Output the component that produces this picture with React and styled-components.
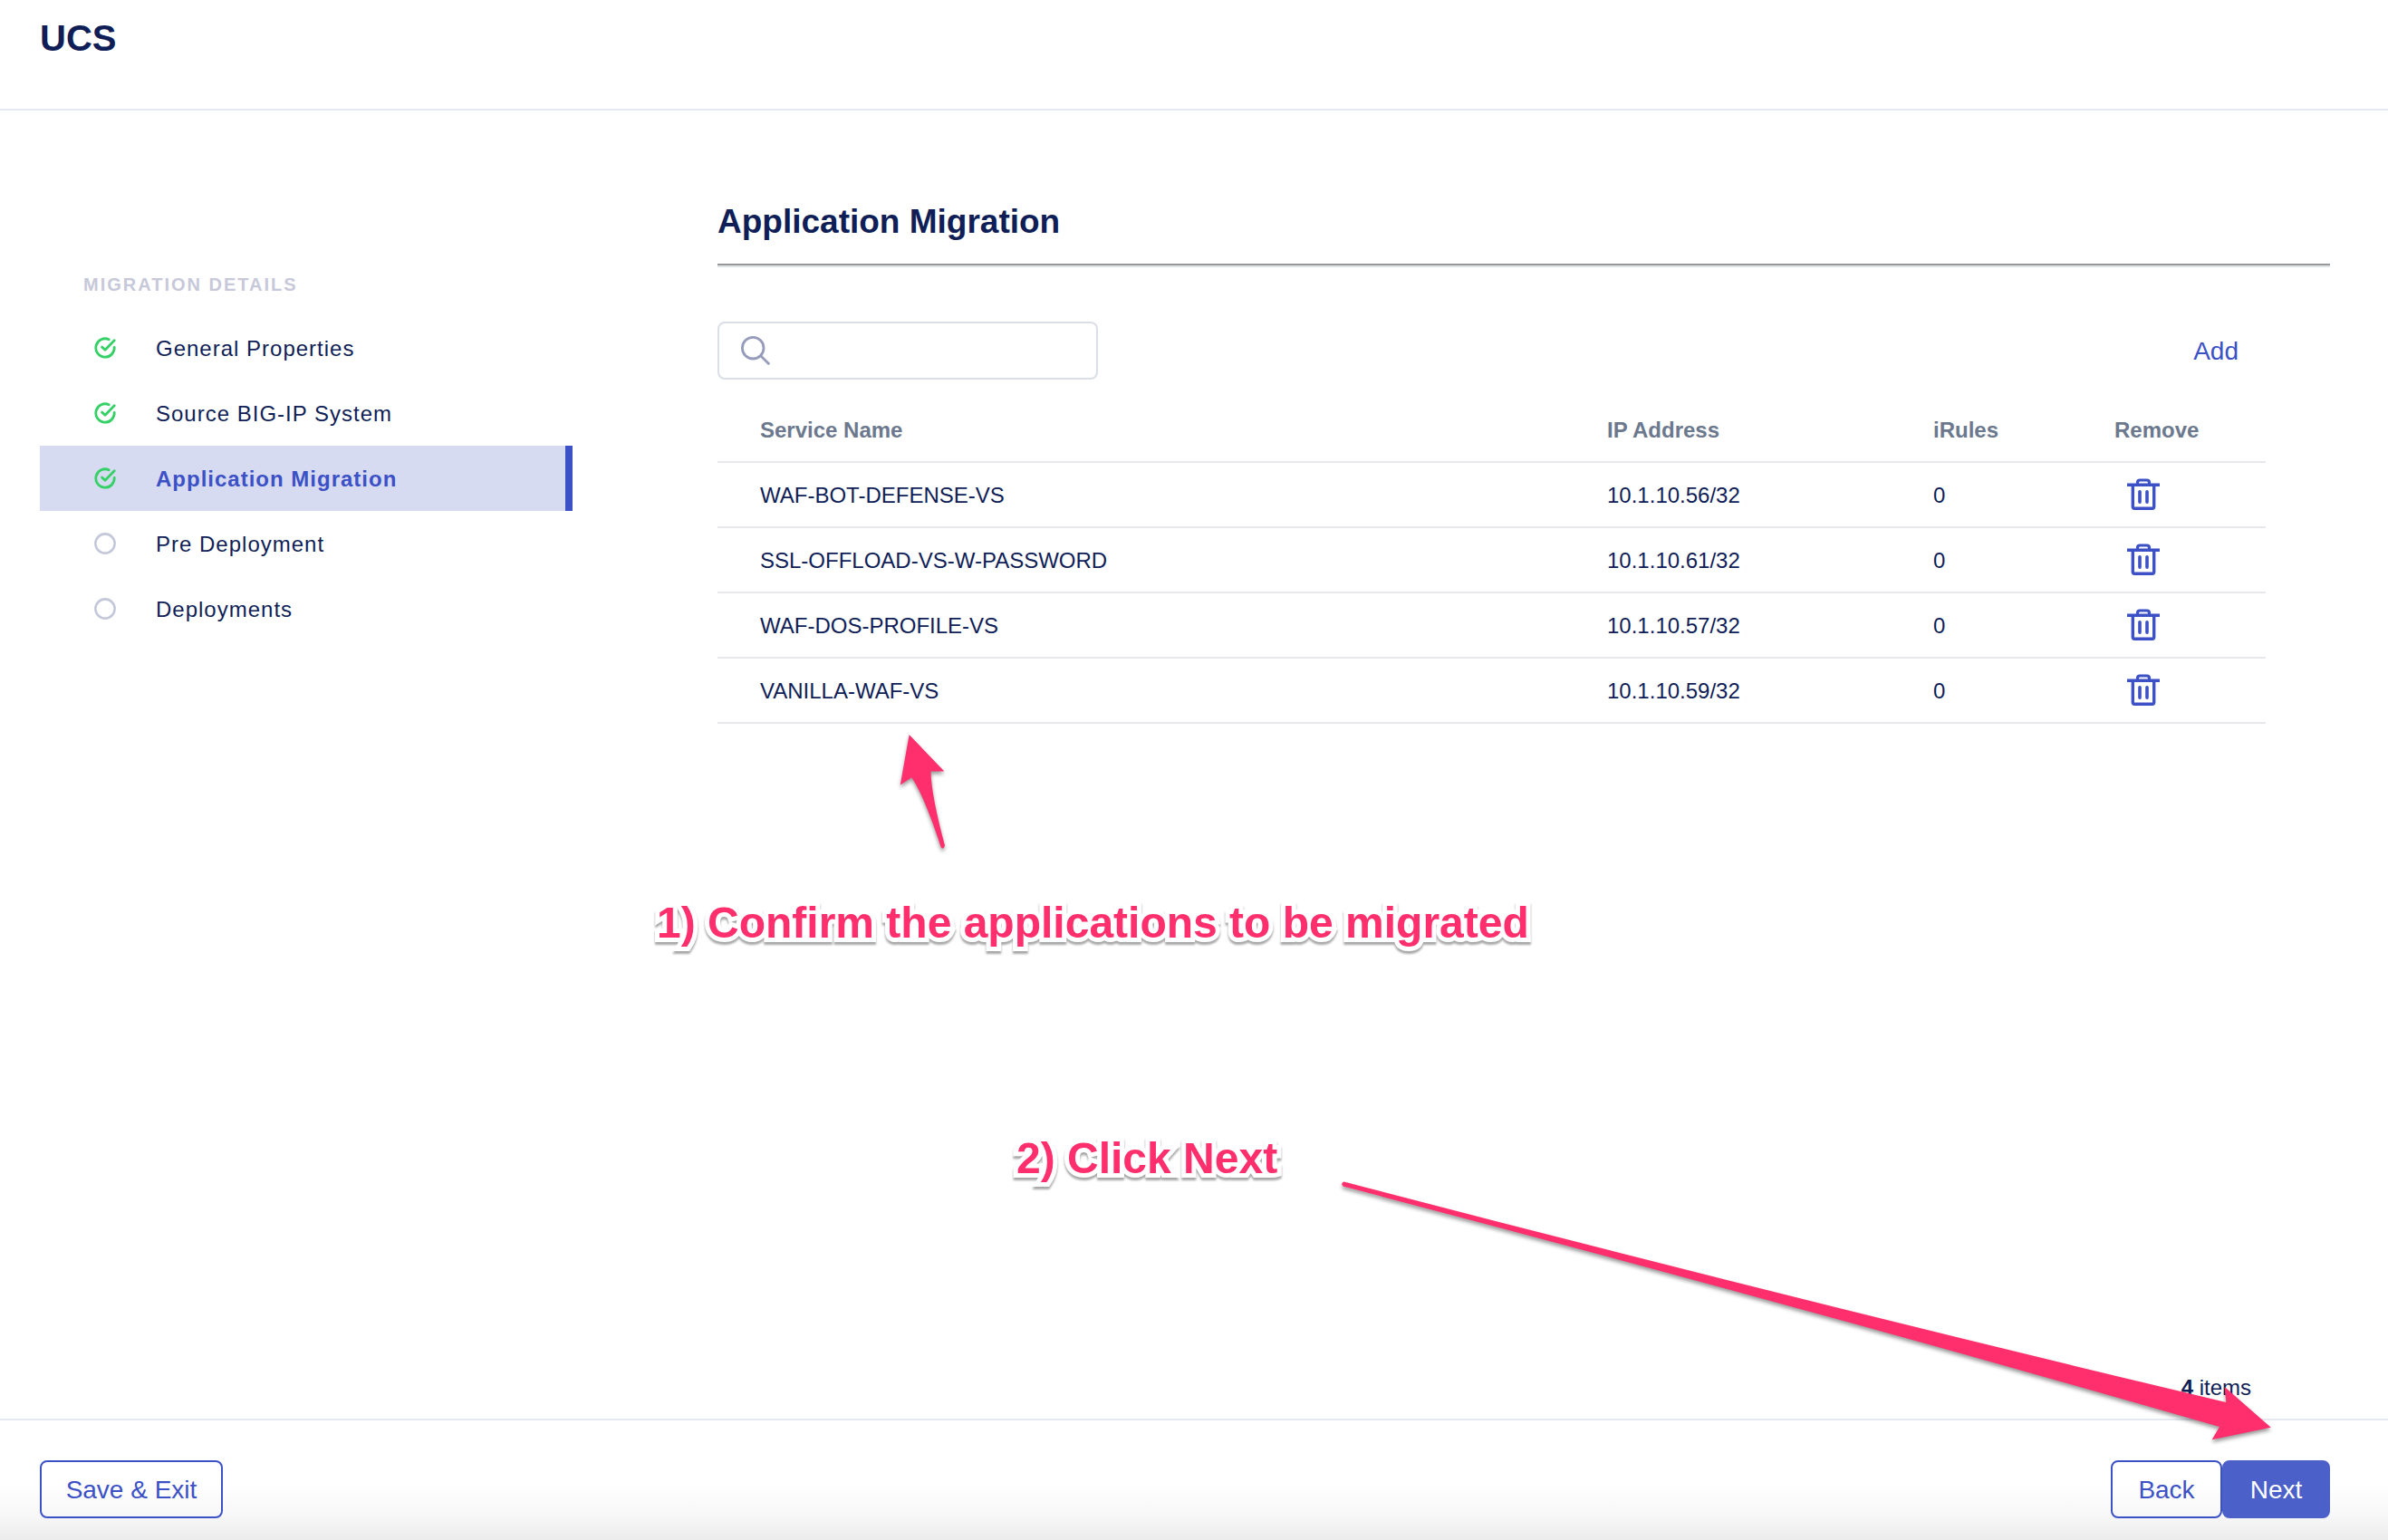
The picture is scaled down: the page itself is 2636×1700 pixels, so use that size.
import React, { useState } from "react";
import styled, { createGlobalStyle, css } from "styled-components";

const c = {
  navy: "#0f1e57",
  blue: "#3b51c5",
  blueFill: "#4c60c9",
  selected: "#d7dbf1",
  muted: "#c7c8d9",
  heading: "#6b788e",
  line: "#e6e8f2",
  rowLine: "#e8e9ef",
  green: "#35d167",
  pink: "#ff2e6c",
};

const GlobalStyle = createGlobalStyle`
  *, *::before, *::after { box-sizing: border-box; }
  body {
    margin: 0;
    background: #fff;
    color: ${c.navy};
    font: 24px/32px "Liberation Sans", Arial, Helvetica, sans-serif;
  }
  button, input { font: inherit; color: inherit; }
`;

const Page = styled.div`
  position: relative;
  display: flex;
  flex-direction: column;
  min-height: 100vh;
  overflow: hidden;
`;

const Header = styled.header`
  height: 122px;
  padding: 18px 44px;
  border-bottom: 2px solid ${c.line};
`;

const PageTitle = styled.h1`
  margin: 0;
  font-size: 40px;
  line-height: 48px;
`;

const Body = styled.div`
  flex: 1;
  display: flex;
  gap: 160px;
  padding: 0 64px 0 44px;
`;

const Sidebar = styled.nav`
  flex: 0 0 588px;
  padding-top: 180px;
`;

const SidebarLabel = styled.h2`
  margin: 0 0 22px;
  padding-left: 48px;
  color: ${c.muted};
  font-size: 20px;
  line-height: 24px;
  letter-spacing: 2px;
`;

const StepList = styled.ol`
  margin: 0;
  padding: 0;
  list-style: none;
`;

const StepLink = styled.a`
  display: flex;
  align-items: center;
  gap: 44px;
  height: 72px;
  padding-left: 60px;
  color: inherit;
  letter-spacing: 1px;
  text-decoration: none;
  ${(p) =>
    p.$active &&
    css`
      color: ${c.blue};
      font-weight: 700;
      background: ${c.selected};
      border-right: 8px solid ${c.blue};
    `}
`;

const StepName = styled.span`
  padding-top: 2px;
`;

const Main = styled.main`
  flex: 1;
  min-width: 0;
  display: flex;
  flex-direction: column;
  padding-top: 99px;
`;

const SectionTitle = styled.h2`
  margin: 0;
  padding-bottom: 22px;
  font-size: 37px;
  line-height: 48px;
`;

const Rule = styled.hr`
  width: 100%;
  margin: 0 0 60px;
  border: 0;
  border-top: 2px solid #979899;
  border-bottom: 2px solid #e0e3e6;
`;

const ListArea = styled.section`
  flex: 1;
  display: flex;
  flex-direction: column;
  padding-right: 71px;
`;

const Toolbar = styled.div`
  display: flex;
  align-items: center;
  justify-content: space-between;
  margin-bottom: 20px;
  padding-right: 30px;
`;

const SearchBox = styled.label`
  display: flex;
  align-items: center;
  gap: 16px;
  width: 420px;
  height: 64px;
  padding: 0 24px;
  border: 2px solid #dbdee7;
  border-radius: 8px;
`;

const SearchInput = styled.input`
  flex: 1;
  min-width: 0;
  padding: 0;
  border: 0;
  outline: 0;
  background: transparent;
`;

const TextButton = styled.button`
  padding: 2px 0 0;
  border: 0;
  background: none;
  color: ${c.blue};
  font-size: 28px;
  cursor: pointer;
`;

const Table = styled.table`
  width: 100%;
  table-layout: fixed;
  border-collapse: separate;
  border-spacing: 0;
`;

const cellBox = css`
  height: 72px;
  padding: 2px 0 0 47px;
  border-bottom: 2px solid ${c.rowLine};
`;

const HeadCell = styled.th`
  ${cellBox}
  width: ${(p) => p.$width || "auto"};
  color: ${c.heading};
  text-align: left;
`;

const Cell = styled.td`
  ${cellBox}
`;

const IconButton = styled.button`
  display: flex;
  padding: 0 14px 2px;
  border: 0;
  background: none;
  color: ${c.blue};
  cursor: pointer;
`;

const Count = styled.p`
  margin: auto 0 0;
  padding: 0 16px 18px 0;
  text-align: right;
`;

const Footer = styled.footer`
  display: flex;
  align-items: center;
  justify-content: space-between;
  padding: 44px 64px 24px 44px;
  border-top: 2px solid ${c.line};
  background: linear-gradient(#fff 52%, #f8f8f8 78%, #ececec);
`;

const ButtonGroup = styled.div`
  display: flex;
`;

const Button = styled.button`
  min-width: ${(p) => p.$width};
  height: 64px;
  padding: 2px 24px 0;
  border: 2px solid ${(p) => (p.$primary ? c.blueFill : c.blue)};
  border-radius: 8px;
  background: ${(p) => (p.$primary ? c.blueFill : "transparent")};
  color: ${(p) => (p.$primary ? "#fff" : c.blue)};
  font-size: 28px;
  cursor: pointer;
`;

/* Tutorial callouts float over the page. */
const Callout = styled.p`
  position: absolute;
  left: ${(p) => p.$x}px;
  top: ${(p) => p.$y}px;
  margin: 0;
  color: ${c.pink};
  font-size: 48px;
  font-weight: 700;
  line-height: 56px;
  white-space: nowrap;
  -webkit-text-stroke: 10px #fff;
  paint-order: stroke fill;
  filter: drop-shadow(0 3px 1px rgba(0, 0, 0, 0.35));
  pointer-events: none;
`;

const Arrows = styled.svg`
  position: absolute;
  left: 0;
  top: 0;
  pointer-events: none;
  fill: ${c.pink};
  filter: drop-shadow(0 3px 2px rgba(0, 0, 0, 0.4));
`;

const DoneIcon = () => (
  <svg width="24" height="24" viewBox="0 0 24 24" fill="none" stroke={c.green} strokeWidth="2.8" strokeLinecap="round" strokeLinejoin="round" aria-hidden="true">
    <path d="M16.2 2.7A10.2 10.2 0 1 0 22.2 11.4" />
    <path d="M8.6 11.1l3.4 3.1L22.2 3.8" />
  </svg>
);

const PendingIcon = () => (
  <svg width="24" height="24" viewBox="0 0 24 24" fill="none" stroke="#c5c8d9" strokeWidth="2.6" aria-hidden="true">
    <circle cx="12" cy="12" r="10.6" />
  </svg>
);

const SearchIcon = () => (
  <svg width="32" height="32" viewBox="0 0 32 32" fill="none" stroke="#969cba" strokeWidth="2.8" aria-hidden="true">
    <circle cx="13.2" cy="13.2" r="11.8" />
    <path d="M21.7 21.7L31.2 31.2" />
  </svg>
);

const TrashIcon = () => (
  <svg width="36" height="36" viewBox="0 0 36 36" fill="none" stroke="currentColor" aria-hidden="true">
    <path d="M0 7.3H36" strokeWidth="3.6" />
    <path d="M11.5 6.5V4.6Q11.5 2 14.3 2H21.7Q24.5 2 24.5 4.6V6.5" strokeWidth="3.2" />
    <path d="M6.3 8V31.3Q6.3 33.3 8.3 33.3H27.7Q29.7 33.3 29.7 31.3V8" strokeWidth="3.4" />
    <path d="M14 14.7V26.3M22 14.7V26.3" strokeWidth="3.6" strokeLinecap="round" />
  </svg>
);

const steps = [
  { name: "General Properties", done: true },
  { name: "Source BIG-IP System", done: true },
  { name: "Application Migration", done: true, active: true },
  { name: "Pre Deployment" },
  { name: "Deployments" },
];

const initialServices = [
  { name: "WAF-BOT-DEFENSE-VS", ip: "10.1.10.56/32", rules: 0 },
  { name: "SSL-OFFLOAD-VS-W-PASSWORD", ip: "10.1.10.61/32", rules: 0 },
  { name: "WAF-DOS-PROFILE-VS", ip: "10.1.10.57/32", rules: 0 },
  { name: "VANILLA-WAF-VS", ip: "10.1.10.59/32", rules: 0 },
];

export default function App() {
  const [services, setServices] = useState(initialServices);
  const [query, setQuery] = useState("");
  const shown = services.filter((s) => s.name.toLowerCase().includes(query.toLowerCase()));

  return (
    <Page>
      <GlobalStyle />
      <Header>
        <PageTitle>UCS</PageTitle>
      </Header>
      <Body>
        <Sidebar>
          <SidebarLabel>MIGRATION DETAILS</SidebarLabel>
          <StepList>
            {steps.map((s) => (
              <li key={s.name}>
                <StepLink href="#" $active={s.active} aria-current={s.active ? "step" : undefined}>
                  {s.done ? <DoneIcon /> : <PendingIcon />}
                  <StepName>{s.name}</StepName>
                </StepLink>
              </li>
            ))}
          </StepList>
        </Sidebar>
        <Main>
          <SectionTitle>Application Migration</SectionTitle>
          <Rule />
          <ListArea>
            <Toolbar>
              <SearchBox>
                <SearchIcon />
                <SearchInput type="text" aria-label="Search" value={query} onChange={(e) => setQuery(e.target.value)} />
              </SearchBox>
              <TextButton type="button">Add</TextButton>
            </Toolbar>
            <Table>
              <thead>
                <tr>
                  <HeadCell scope="col">Service Name</HeadCell>
                  <HeadCell scope="col" $width="360px">IP Address</HeadCell>
                  <HeadCell scope="col" $width="200px">iRules</HeadCell>
                  <HeadCell scope="col" $width="214px">Remove</HeadCell>
                </tr>
              </thead>
              <tbody>
                {shown.map((s) => (
                  <tr key={s.name}>
                    <Cell>{s.name}</Cell>
                    <Cell>{s.ip}</Cell>
                    <Cell>{s.rules}</Cell>
                    <Cell>
                      <IconButton
                        type="button"
                        aria-label={`Remove ${s.name}`}
                        onClick={() => setServices(services.filter((x) => x !== s))}
                      >
                        <TrashIcon />
                      </IconButton>
                    </Cell>
                  </tr>
                ))}
              </tbody>
            </Table>
            <Count>
              <b>{shown.length}</b> items
            </Count>
          </ListArea>
        </Main>
      </Body>
      <Footer>
        <Button type="button" $width="202px">Save &amp; Exit</Button>
        <ButtonGroup>
          <Button type="button" $width="123px">Back</Button>
          <Button type="button" $width="119px" $primary>Next</Button>
        </ButtonGroup>
      </Footer>
      <Callout $x={725} $y={991}>1) Confirm the applications to be migrated</Callout>
      <Callout $x={1122} $y={1251}>2) Click Next</Callout>
      <Arrows width="2636" height="1700" viewBox="0 0 2636 1700" aria-hidden="true">
        <path d="M1003.6 811L1042.4 851.5H1027.5Q1028 878 1043 933.5Q1041.5 938 1038.8 935.5Q1020 878 1006.3 858.3L993.8 866.5Z" />
        <path d="M1483.5 1304.4Q1970 1432 2457.3 1548L2455.7 1531L2506.7 1575.7L2441.7 1589.3L2450 1575Q1966 1436 1482.5 1309.6Q1479.5 1306 1483.5 1304.4Z" />
      </Arrows>
    </Page>
  );
}
